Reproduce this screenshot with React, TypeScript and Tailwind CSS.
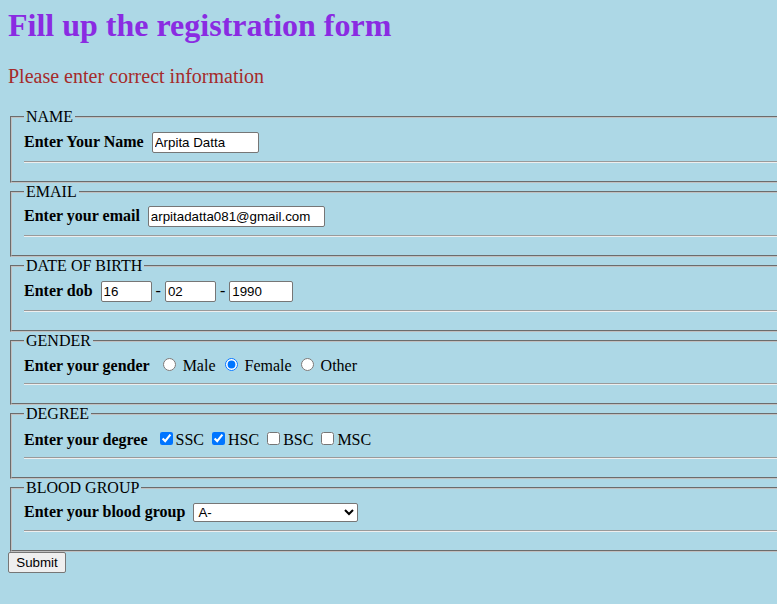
import React from 'react'

const inputCls =
  "h-[21px] border border-[#767676] rounded-[2px] bg-white px-[2px] py-[1px] text-[13.333px] leading-[normal] text-black font-['Liberation_Sans',Arial,sans-serif] align-baseline outline-none"

function Section({ title, children }: { title: string; children: React.ReactNode }) {
  return (
    <fieldset className="mx-[2px] border-2 border-[#c0c0c0] [border-style:groove] px-3 pt-[5.6px] pb-[10px]">
      <legend className="px-[2px]">{title}</legend>
      <div>{children}</div>
      <hr className="my-2 h-0 border-t border-t-[#9a9a9a] border-b border-b-[#eeeeee]" />
    </fieldset>
  )
}

export default function App() {
  return (
    <div className="min-h-screen overflow-hidden bg-[#add8e6] px-2 pt-[7px] pb-2 text-[16px] leading-[normal] text-black font-['Liberation_Serif','Times_New_Roman',serif]">
      <h1 className="mb-[21px] text-[32px] font-bold text-[#8a2be2]">Fill up the registration form</h1>
      <p className="mb-5 text-[20px] text-[#a52a2a]">Please enter correct information</p>

      <form className="w-[1200px]" onSubmit={(e) => e.preventDefault()}>
        <Section title="NAME">
          <label className="mr-2 font-bold">Enter Your Name</label>
          <input type="text" defaultValue="Arpita Datta" className={`${inputCls} w-[107px]`} />
        </Section>

        <Section title="EMAIL">
          <label className="mr-2 font-bold">Enter your email</label>
          <input type="text" defaultValue="arpitadatta081@gmail.com" className={`${inputCls} w-[177px]`} />
        </Section>

        <Section title="DATE OF BIRTH">
          <label className="mr-2 font-bold">Enter dob</label>
          <input type="text" defaultValue="16" className={`${inputCls} w-[51px]`} /> -{' '}
          <input type="text" defaultValue="02" className={`${inputCls} w-[51px]`} /> -{' '}
          <input type="text" defaultValue="1990" className={`${inputCls} w-[64px]`} />
        </Section>

        <Section title="GENDER">
          <label className="mr-2 font-bold">Enter your gender</label>
          <input type="radio" name="gender" className="mt-[3px] mr-[3px] ml-[5px]" /> Male{' '}
          <input type="radio" name="gender" defaultChecked className="mt-[3px] mr-[3px] ml-[5px]" /> Female{' '}
          <input type="radio" name="gender" className="mt-[3px] mr-[3px] ml-[5px]" /> Other
        </Section>

        <Section title="DEGREE">
          <label className="mr-2 font-bold">Enter your degree</label>
          <input type="checkbox" defaultChecked className="my-[3px] mr-[3px] ml-[4px]" />SSC{' '}
          <input type="checkbox" defaultChecked className="my-[3px] mr-[3px] ml-[4px]" />HSC{' '}
          <input type="checkbox" className="my-[3px] mr-[3px] ml-[4px]" />BSC{' '}
          <input type="checkbox" className="my-[3px] mr-[3px] ml-[4px]" />MSC
        </Section>

        <Section title="BLOOD GROUP">
          <label className="mr-2 font-bold">Enter your blood group</label>
          <select
            defaultValue="A-"
            className="h-[19px] w-[165px] border border-[#767676] rounded-[2px] bg-white text-[13.333px] leading-[normal] text-black font-['Liberation_Sans',Arial,sans-serif]"
          >
            <option>A+</option>
            <option>A-</option>
            <option>B+</option>
            <option>B-</option>
            <option>AB+</option>
            <option>AB-</option>
            <option>O+</option>
            <option>O-</option>
          </select>
        </Section>

        <button
          type="submit"
          className="h-[21px] w-[58px] border border-[#767676] rounded-[2px] bg-[#efefef] text-[13.333px] leading-[normal] text-black font-['Liberation_Sans',Arial,sans-serif]"
        >
          Submit
        </button>
      </form>
    </div>
  )
}
